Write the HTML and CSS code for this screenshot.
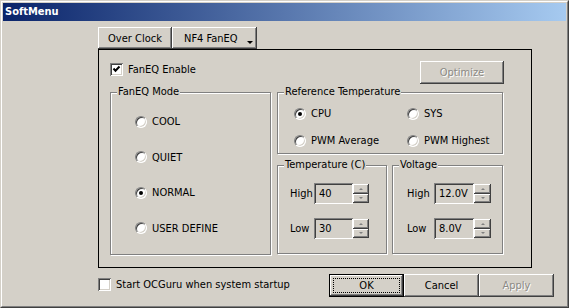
FILE: index.html
```html
<!DOCTYPE html>
<html lang="en">
<head>
  <meta charset="UTF-8">
  <title>SoftMenu</title>
  <link rel="stylesheet" href="styles.css">
</head>
<body>
<div class="window">
  <div class="frame">
    <div class="titlebar">SoftMenu</div>
    <div class="client">
      <div class="tabs">
        <div class="btn tab">Over Clock</div>
        <div class="btn tab tab-menu">NF4 FanEQ<span class="drop"></span></div>
      </div>
      <div class="panel">
        <div class="top-row">
          <label class="check">
            <span class="box">
              <svg width="9" height="9" viewBox="0 0 9 9"><path d="M1.5 3.5 L3.5 5.8 L7.5 1.5" fill="none" stroke="#000" stroke-width="2"/></svg>
            </span>
            FanEQ Enable
          </label>
          <div class="btn disabled optimize">Optimize</div>
        </div>
        <div class="groups">
          <div class="group mode">
            <span class="group-title">FanEQ Mode</span>
            <div class="mode-list">
              <label class="radio"><span class="dot"></span>COOL</label>
              <label class="radio"><span class="dot"></span>QUIET</label>
              <label class="radio"><span class="dot on"></span>NORMAL</label>
              <label class="radio"><span class="dot"></span>USER DEFINE</label>
            </div>
          </div>
          <div class="right-col">
            <div class="group ref">
              <span class="group-title">Reference Temperature</span>
              <div class="ref-grid">
                <label class="radio"><span class="dot on"></span>CPU</label>
                <label class="radio"><span class="dot"></span>SYS</label>
                <label class="radio"><span class="dot"></span>PWM Average</label>
                <label class="radio"><span class="dot"></span>PWM Highest</label>
              </div>
            </div>
            <div class="bottom-groups">
              <div class="group temp">
                <span class="group-title">Temperature (C)</span>
                <div class="field-list">
                  <div class="field"><span class="field-label">High</span><div class="edit">40</div><div class="spin"><span class="up"></span><span class="down"></span></div></div>
                  <div class="field"><span class="field-label">Low</span><div class="edit">30</div><div class="spin"><span class="up"></span><span class="down"></span></div></div>
                </div>
              </div>
              <div class="group volt">
                <span class="group-title">Voltage</span>
                <div class="field-list">
                  <div class="field"><span class="field-label">High</span><div class="edit">12.0V</div><div class="spin"><span class="up"></span><span class="down"></span></div></div>
                  <div class="field"><span class="field-label">Low</span><div class="edit">8.0V</div><div class="spin"><span class="up"></span><span class="down"></span></div></div>
                </div>
              </div>
            </div>
          </div>
        </div>
      </div>
      <div class="footer">
        <label class="check startup"><span class="box empty"></span>Start OCGuru when system startup</label>
        <div class="actions">
          <div class="btn default">OK</div>
          <div class="btn">Cancel</div>
          <div class="btn disabled">Apply</div>
        </div>
      </div>
    </div>
  </div>
</div>
</body>
</html>
```

FILE: styles.css
```css
html, body {
  margin: 0;
  height: 100%;
}
body {
  background: #d4d0c8;
  font-family: "DejaVu Sans Condensed", "Liberation Sans", sans-serif;
  font-size: 11px;
  color: #000;
  overflow: hidden;
}
.window {
  width: 569px;
  height: 308px;
  box-sizing: border-box;
  border: 1px solid;
  border-color: #d4d0c8 #404040 #404040 #d4d0c8;
}
.frame {
  height: 100%;
  box-sizing: border-box;
  border: 1px solid;
  border-color: #fff #808080 #808080 #fff;
  padding: 1px;
}
.titlebar {
  height: 18px;
  line-height: 18px;
  padding-left: 2px;
  background: linear-gradient(to right, #0a246a, #a6caf0);
  color: #fff;
  font-weight: bold;
}
.client {
  padding: 6px 0 0 95px;
}

/* buttons */
.btn {
  position: relative;
  box-sizing: border-box;
  display: flex;
  align-items: center;
  justify-content: center;
  background: #d4d0c8;
  box-shadow: inset -1px -1px #404040, inset 1px 1px #fff, inset -2px -2px #808080, inset 2px 2px #d4d0c8;
}
.btn.disabled {
  color: #8c8a85;
  text-shadow: 1px 1px #fff;
}
.btn.default {
  border: 1px solid #000;
}
.btn.default::after {
  content: "";
  position: absolute;
  top: 3px;
  left: 3px;
  right: 3px;
  bottom: 3px;
  border: 1px dotted #000;
}

/* tabs */
.tabs {
  display: flex;
  height: 22px;
}
.tab {
  width: 74px;
  height: 22px;
}
.tab-menu {
  width: 85px;
  justify-content: flex-start;
  padding-left: 12px;
}
.drop {
  margin: 9px 0 0 9px;
  border-left: 3px solid transparent;
  border-right: 3px solid transparent;
  border-top: 3px solid #000;
}

/* main panel */
.panel {
  width: 434px;
  height: 219px;
  box-sizing: border-box;
  border: 1px solid #000;
  padding: 11px 0 0 11px;
}
.top-row {
  display: flex;
  justify-content: space-between;
  width: 394px;
  height: 23px;
}
.check {
  display: flex;
  align-items: center;
  gap: 5px;
  height: 13px;
  margin-top: 2px;
}
.box {
  width: 13px;
  height: 13px;
  box-sizing: border-box;
  display: flex;
  align-items: center;
  justify-content: center;
  background: #fff;
  box-shadow: inset 1px 1px #808080, inset -1px -1px #fff, inset 2px 2px #404040, inset -2px -2px #d4d0c8;
}
.optimize {
  width: 84px;
  height: 23px;
}

/* group boxes */
.groups {
  display: flex;
  gap: 6px;
  margin-top: 8px;
}
.group {
  position: relative;
  box-sizing: border-box;
  border: 1px solid #808080;
  box-shadow: inset 1px 1px #fff, 1px 1px #fff;
}
.group-title {
  position: absolute;
  top: -8px;
  left: 6px;
  padding: 0 1px;
  line-height: 14px;
  background: #d4d0c8;
}
.mode {
  width: 161px;
  height: 163px;
}
.mode-list {
  display: flex;
  flex-direction: column;
  gap: 22.5px;
  padding: 22px 0 0 24px;
}
.radio {
  display: flex;
  align-items: center;
  gap: 5px;
  height: 13px;
}
.dot {
  position: relative;
  width: 12px;
  height: 12px;
  box-sizing: border-box;
  border-radius: 50%;
  border: 1px solid;
  border-color: #808080 #fff #fff #808080;
  background: #fff;
  box-shadow: inset 1px 1px #404040, inset -1px -1px #d4d0c8;
}
.dot.on::after {
  content: "";
  position: absolute;
  top: 3px;
  left: 3px;
  width: 4px;
  height: 4px;
  border-radius: 50%;
  background: #000;
}
.right-col {
  display: flex;
  flex-direction: column;
  gap: 11px;
  width: 226px;
}
.ref {
  height: 62px;
}
.ref-grid {
  display: grid;
  grid-template-columns: 113px auto;
  row-gap: 14px;
  padding: 14px 0 0 16px;
}
.bottom-groups {
  display: flex;
  gap: 5px;
}
.temp, .volt {
  height: 89px;
}
.temp {
  width: 110px;
}
.volt {
  width: 111px;
}
.field-list {
  display: flex;
  flex-direction: column;
  gap: 14px;
  padding: 17px 0 0 12px;
}
.volt .field-list {
  padding-left: 14px;
}
.field {
  display: flex;
  align-items: center;
}
.field-label {
  width: 24px;
}
.volt .field-label {
  width: 27px;
}
.edit {
  width: 39px;
  height: 21px;
  box-sizing: border-box;
  padding-left: 5px;
  line-height: 21px;
  box-shadow: inset 1px 1px #808080, inset -1px -1px #fff, inset 2px 2px #404040, inset -2px -2px #d4d0c8;
}
.volt .edit {
  width: 40px;
}
.spin {
  display: flex;
  flex-direction: column;
  width: 16px;
  height: 19px;
}
.volt .spin {
  width: 17px;
}
.spin span {
  flex: 1;
  display: flex;
  align-items: center;
  justify-content: center;
  box-shadow: inset -1px -1px #404040, inset 1px 1px #fff, inset -2px -2px #808080;
}
.spin span::after {
  content: "";
  border-left: 2px solid transparent;
  border-right: 2px solid transparent;
}
.spin .up::after {
  border-bottom: 2px solid #808080;
}
.spin .down::after {
  border-top: 2px solid #808080;
}

/* footer */
.footer {
  display: flex;
  align-items: center;
  height: 23px;
  margin-top: 6px;
  padding-right: 12px;
}
.startup {
  margin-top: -2px;
}
.actions {
  display: flex;
  margin-left: auto;
}
.actions .btn {
  width: 75px;
  height: 23px;
}
```
